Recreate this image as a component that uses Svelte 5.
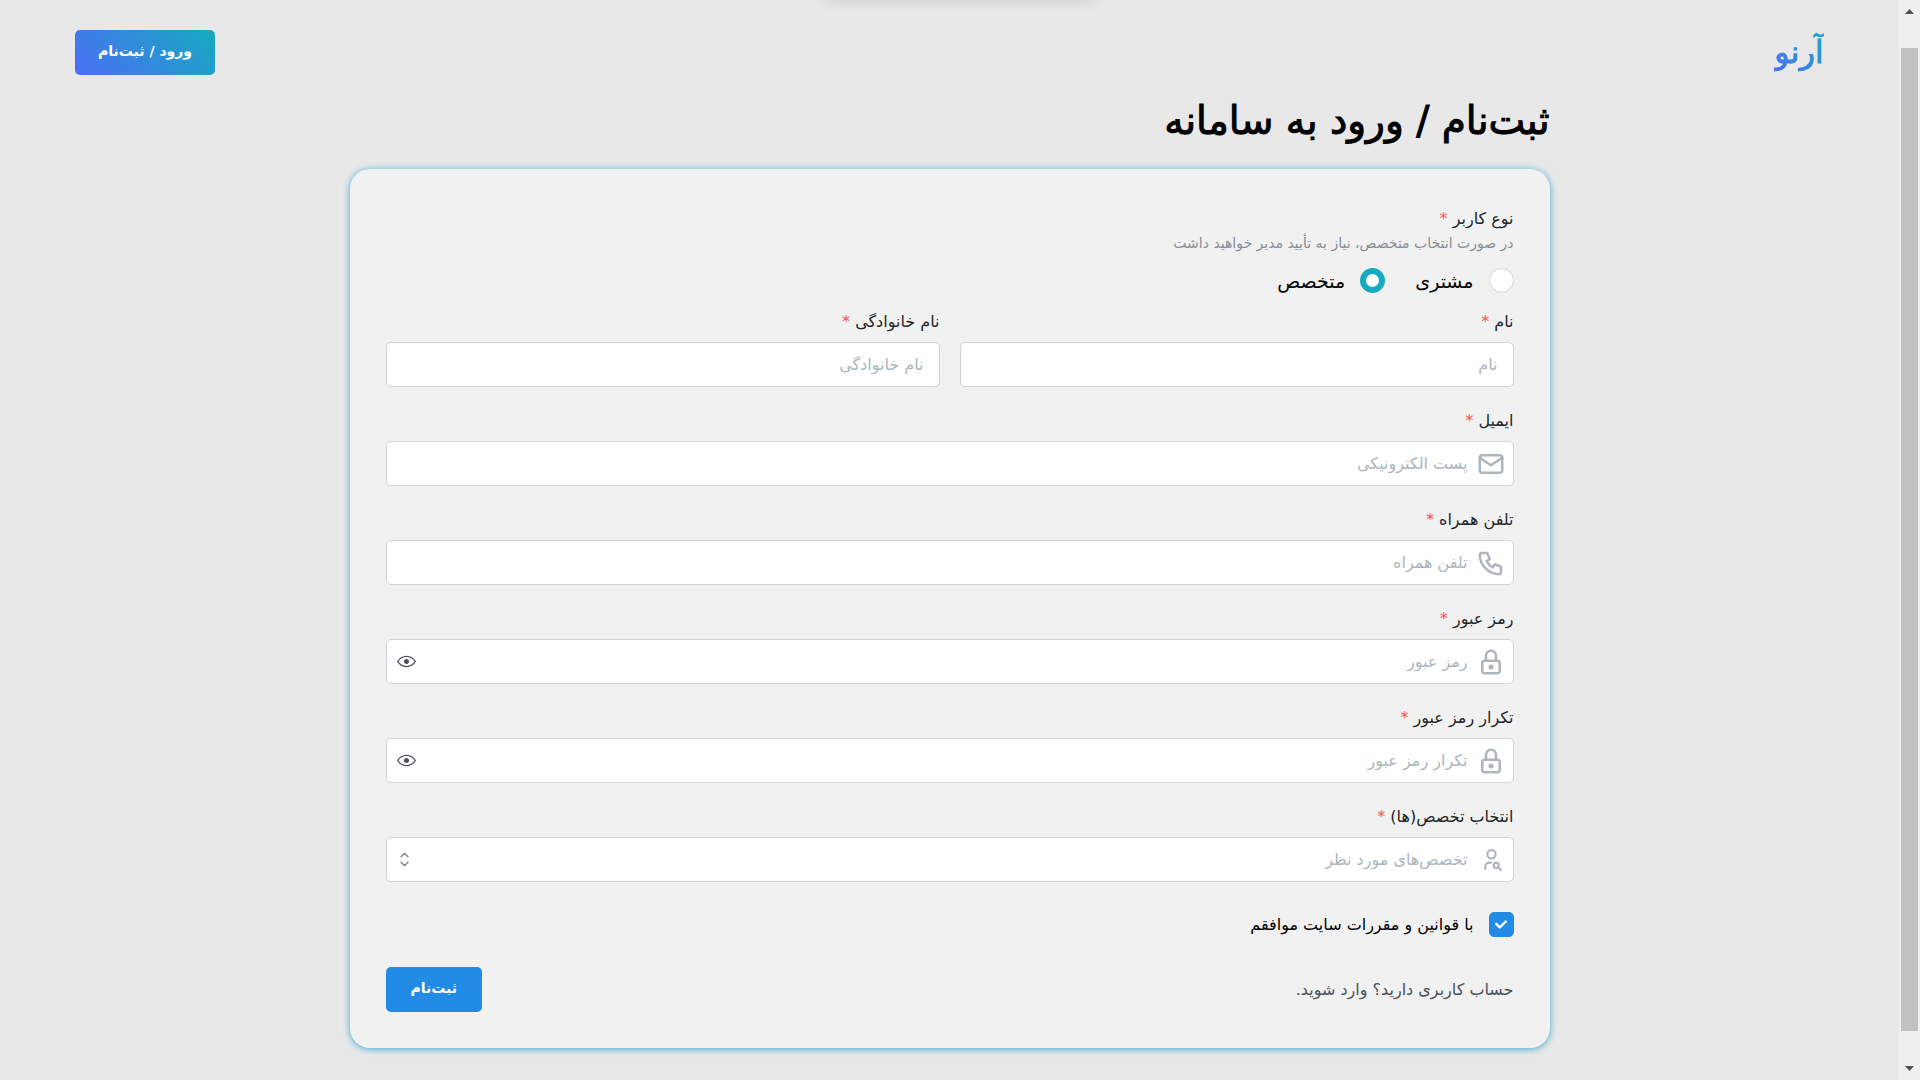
<script>
  let role = $state('expert');
  let agreed = $state(true);
  let specialty = $state('');
  let shown = $state({ password: false, repeat: false });

  const fields = [
    { id: 'email', label: 'ایمیل', placeholder: 'پست الکترونیکی', icon: 'mail', type: 'email' },
    { id: 'phone', label: 'تلفن همراه', placeholder: 'تلفن همراه', icon: 'phone', type: 'tel' },
    { id: 'password', label: 'رمز عبور', placeholder: 'رمز عبور', icon: 'lock', type: 'password' },
    { id: 'repeat', label: 'تکرار رمز عبور', placeholder: 'تکرار رمز عبور', icon: 'lock', type: 'password' }
  ];
</script>

{#snippet star()}<span class="star" aria-hidden="true">*</span>{/snippet}

<div class="window">
  <div class="page" dir="rtl" lang="fa">
    <div class="top-shade" aria-hidden="true"></div>
    <header>
      <a class="logo" href="#home">آرنو</a>
      <button class="btn gradient" type="button">ورود / ثبت‌نام</button>
    </header>

    <main>
      <h1>ثبت‌نام / ورود به سامانه</h1>

      <form class="card" onsubmit={(e) => e.preventDefault()}>
        <div class="roles" role="radiogroup" aria-labelledby="role-label">
          <div class="label" id="role-label">نوع کاربر {@render star()}</div>
          <p class="hint">در صورت انتخاب متخصص، نیاز به تأیید مدیر خواهید داشت</p>
          <div class="options">
            <label class="choice"><input type="radio" value="customer" bind:group={role} />مشتری</label>
            <label class="choice"><input type="radio" value="expert" bind:group={role} />متخصص</label>
          </div>
        </div>

        <div class="pair">
          <div class="field">
            <label class="label" for="first">نام {@render star()}</label>
            <input class="box" id="first" type="text" placeholder="نام" />
          </div>
          <div class="field">
            <label class="label" for="last">نام خانوادگی {@render star()}</label>
            <input class="box" id="last" type="text" placeholder="نام خانوادگی" />
          </div>
        </div>

        {#each fields as f (f.id)}
          <div class="field">
            <label class="label" for={f.id}>{f.label} {@render star()}</label>
            <div class="control">
              <input
                class="box with-icon"
                id={f.id}
                type={shown[f.id] ? 'text' : f.type}
                placeholder={f.placeholder}
              />
              <svg class="lead" viewBox="0 0 24 24" width="30" height="30" aria-hidden="true">
                {#if f.icon === 'mail'}
                  <rect x="3" y="5" width="18" height="14" rx="2" />
                  <path d="M3 7l9 6l9 -6" />
                {:else if f.icon === 'phone'}
                  <path d="M5 4h4l2 5l-2.5 1.5a11 11 0 0 0 5 5l1.500 -2.500l5 2v4a2 2 0 0 1 -2 2a16 16 0 0 1 -15 -15a2 2 0 0 1 2 -2" />
                {:else}
                  <rect x="5" y="11" width="14" height="10" rx="2" />
                  <circle cx="12" cy="16" r="1" />
                  <path d="M8 11v-4a4 4 0 0 1 8 0v4" />
                {/if}
              </svg>
              {#if f.type === 'password'}
                <button
                  class="eye"
                  type="button"
                  aria-label="نمایش رمز"
                  onclick={() => (shown[f.id] = !shown[f.id])}
                >
                  <svg viewBox="0 0 15 15" width="19" height="19" aria-hidden="true">
                    <path
                      fill-rule="evenodd"
                      d="M7.5 11C4.803 11 2.53 9.622 1.096 7.5C2.53 5.378 4.803 4 7.5 4C10.197 4 12.47 5.378 13.904 7.5C12.47 9.622 10.197 11 7.5 11ZM7.5 3C4.308 3 1.656 4.706 0.076 7.235C-0.025 7.397 -0.025 7.603 0.076 7.765C1.656 10.294 4.308 12 7.5 12C10.692 12 13.344 10.294 14.924 7.765C15.025 7.603 15.025 7.397 14.924 7.235C13.344 4.706 10.692 3 7.5 3ZM7.5 9.5C8.605 9.5 9.5 8.605 9.5 7.5C9.5 6.395 8.605 5.5 7.5 5.5C6.395 5.5 5.5 6.395 5.5 7.5C5.5 8.605 6.395 9.5 7.5 9.5Z"
                    />
                  </svg>
                </button>
              {/if}
            </div>
          </div>
        {/each}

        <div class="field">
          <label class="label" for="specialty">انتخاب تخصص(ها) {@render star()}</label>
          <div class="control">
            <select class="box with-icon" id="specialty" bind:value={specialty}>
              <option value="">تخصص‌های مورد نظر</option>
            </select>
            <svg class="lead small" viewBox="0 0 24 24" width="25" height="25" aria-hidden="true">
              <circle cx="12" cy="7" r="4" />
              <path d="M6 21v-2a4 4 0 0 1 4 -4h1.500" />
              <circle cx="16.500" cy="17.500" r="2.500" />
              <path d="M18.500 19.500l2.500 2.500" />
            </svg>
            <svg class="sort" viewBox="0 0 15 15" width="23" height="23" aria-hidden="true">
              <path d="M5.250 5.750L7.500 3.500L9.750 5.750M5.250 9.250L7.500 11.500L9.750 9.250" />
            </svg>
          </div>
        </div>

        <label class="agree">
          <span class="tick">
            <input type="checkbox" bind:checked={agreed} />
            {#if agreed}
              <svg viewBox="0 0 10 7" width="12" height="9" aria-hidden="true">
                <path d="M4 4.586L1.707 2.293A1 1 0 1 0 .293 3.707l3 3a.997.997 0 0 0 1.414 0l5-5A1 1 0 1 0 8.293.293L4 4.586z" />
              </svg>
            {/if}
          </span>
          با قوانین و مقررات سایت موافقم
        </label>

        <div class="actions">
          <a class="signin" href="#login">حساب کاربری دارید؟ وارد شوید.</a>
          <button class="btn submit" type="submit">ثبت‌نام</button>
        </div>
      </form>
    </main>
  </div>

  <div class="scrollbar" aria-hidden="true">
    <svg viewBox="0 0 9 5" width="9" height="5"><path d="M0 5L4.500 0L9 5z" /></svg>
    <div class="thumb"></div>
    <svg viewBox="0 0 9 5" width="9" height="5"><path d="M0 0L4.500 5L9 0z" /></svg>
  </div>
</div>

<style>
  :global(body) {
    margin: 0;
    background: #e8e8e8;
  }
  .window {
    display: flex;
    height: 100vh;
    overflow: hidden;
    font-family: 'DejaVu Sans', sans-serif;
    font-size: 16px;
    color: #000;
  }
  .window :global(*) {
    box-sizing: border-box;
  }
  .page {
    position: relative;
    flex: 1;
    min-width: 0;
    overflow: hidden;
  }
  .top-shade {
    position: absolute;
    top: -20px;
    left: 20px;
    right: 0;
    width: 270px;
    height: 18px;
    margin: 0 auto;
    box-shadow: 0 2px 14px rgba(0, 0, 0, 0.13);
  }
  header {
    display: flex;
    justify-content: space-between;
    align-items: center;
    padding: 30px 75px 0;
    height: 75px;
  }
  .logo {
    font-size: 32px;
    line-height: 45px;
    text-decoration: none;
    color: transparent;
    background: linear-gradient(45deg, #4c6ef5, #15aabf);
    -webkit-background-clip: text;
    background-clip: text;
    -webkit-text-stroke: 1px transparent;
  }
  .btn {
    height: 45px;
    border: 0;
    border-radius: 5px;
    padding: 0 23px 3px;
    font: bold 14px 'DejaVu Sans', sans-serif;
    color: #fff;
    white-space: nowrap;
  }
  .gradient {
    background: linear-gradient(45deg, #4c6ef5, #15aabf);
  }
  .submit {
    padding: 0 25px 3px;
    background: #228be6;
  }
  main {
    width: calc(100% - 40px);
    max-width: 1200px;
    margin: 0 auto;
  }
  h1 {
    margin: 0;
    padding: 18px 0 20px;
    font-size: 39px;
    font-weight: 400;
    line-height: 56px;
    -webkit-text-stroke: 1px #000;
  }
  .card {
    padding: 36px;
    border-radius: 20px;
    background: #f1f1f1;
    box-shadow: 0 1px 7px #3ea8d2;
  }
  .label {
    display: block;
    font-size: 16px;
    line-height: 28px;
    color: #212529;
  }
  .field .label {
    margin-bottom: 6px;
  }
  .star {
    color: #fa5252;
  }
  .hint {
    margin: 0;
    font-size: 14px;
    line-height: 20px;
    color: #868e96;
  }
  .options {
    display: flex;
    gap: 30px;
    padding: 15px 0;
  }
  .choice {
    display: flex;
    align-items: center;
    gap: 15px;
    height: 25px;
    font-size: 19px;
  }
  .choice input {
    appearance: none;
    width: 25px;
    height: 25px;
    margin: 0;
    border: 1px solid #ced4da;
    border-radius: 50%;
    background: #fff;
  }
  .choice input:checked {
    border: 6px solid #15aabf;
  }
  .pair {
    display: grid;
    grid-template-columns: 1fr 1fr;
    gap: 20px;
  }
  .field {
    min-width: 0;
    margin-bottom: 20px;
  }
  .control {
    position: relative;
  }
  .box {
    display: block;
    width: 100%;
    height: 45px;
    padding: 0 15px;
    border: 1px solid #ced4da;
    border-radius: 5px;
    background: #fff;
    font: 16px 'DejaVu Sans', sans-serif;
    color: #212529;
    text-align: right;
    direction: rtl;
  }
  .box::placeholder {
    color: #adb5bd;
    opacity: 1;
  }
  .with-icon {
    padding-right: 45px;
  }
  select.box {
    appearance: none;
    color: #adb5bd;
  }
  .lead {
    position: absolute;
    top: 0;
    bottom: 0;
    right: 8px;
    margin: auto 0;
    fill: none;
    stroke: #adb5bd;
    stroke-width: 2;
    stroke-linecap: round;
    stroke-linejoin: round;
    pointer-events: none;
  }
  .lead.small {
    right: 10px;
  }
  .eye {
    position: absolute;
    left: 1px;
    top: 1px;
    width: 40px;
    height: 43px;
    padding: 0;
    border: 0;
    background: none;
    display: grid;
    place-items: center;
    fill: #495057;
  }
  .sort {
    position: absolute;
    top: 0;
    bottom: 0;
    left: 7px;
    margin: auto 0;
    fill: none;
    stroke: #868e96;
    stroke-linecap: round;
    stroke-linejoin: round;
    pointer-events: none;
  }
  .agree {
    display: flex;
    width: fit-content;
    align-items: center;
    gap: 15px;
    height: 25px;
    margin-top: 30px;
    font-size: 16px;
  }
  .tick {
    position: relative;
    display: grid;
    place-items: center;
    width: 25px;
    height: 25px;
  }
  .tick input {
    appearance: none;
    width: 25px;
    height: 25px;
    margin: 0;
    border: 1px solid #ced4da;
    border-radius: 5px;
    background: #fff;
  }
  .tick input:checked {
    border-color: #228be6;
    background: #228be6;
  }
  .tick svg {
    position: absolute;
    fill: #fff;
    pointer-events: none;
  }
  .actions {
    display: flex;
    justify-content: space-between;
    align-items: center;
    margin-top: 30px;
  }
  .signin {
    color: #495057;
    text-decoration: none;
    font-size: 16px;
  }
  .scrollbar {
    display: flex;
    flex-direction: column;
    align-items: center;
    width: 21px;
    padding: 9px 0;
    background: #f0f0f0;
    fill: #505050;
  }
  .thumb {
    flex: 1;
    width: 17px;
    margin: 34px 0 35px;
    background: #c1c1c1;
  }
</style>
